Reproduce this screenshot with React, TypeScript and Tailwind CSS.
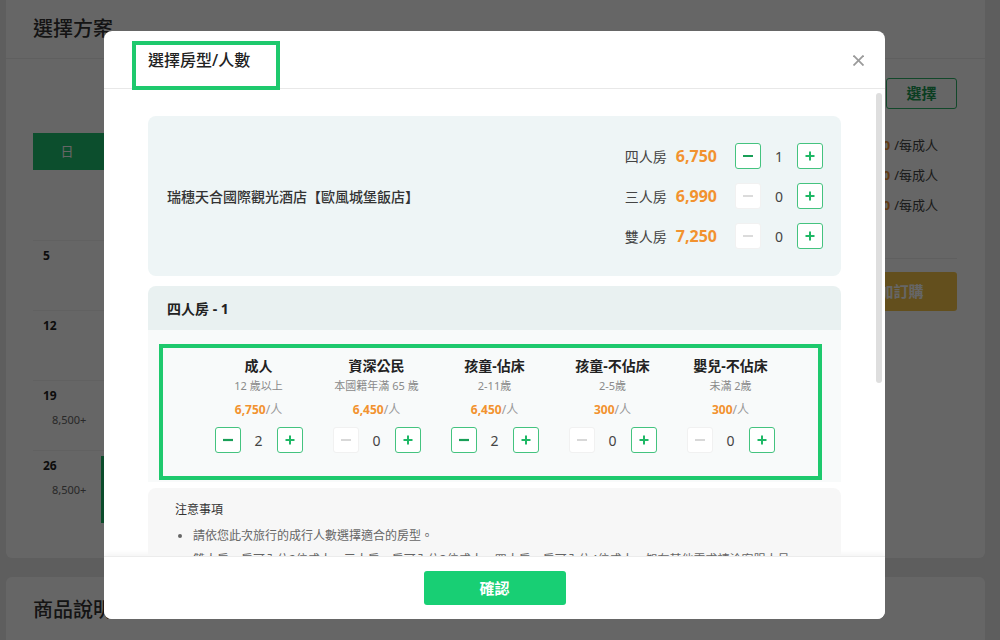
import React from "react";

const FONT = "font-['Noto_Sans','Noto_Sans_CJK_TC',sans-serif]";

function MinusIcon({ active }: { active: boolean }) {
  return (
    <svg width="12" height="12" viewBox="0 0 12 12">
      <line x1="1" y1="6" x2="11" y2="6" stroke={active ? "#1a9f58" : "#cfcfcf"} strokeWidth={active ? 2.2 : 1.6} />
    </svg>
  );
}

function PlusIcon() {
  return (
    <svg width="12" height="12" viewBox="0 0 12 12">
      <line x1="1.5" y1="6" x2="10.5" y2="6" stroke="#1fb866" strokeWidth="2" />
      <line x1="6" y1="1.5" x2="6" y2="10.5" stroke="#1fb866" strokeWidth="2" />
    </svg>
  );
}

function Counter({ value, minusActive }: { value: number; minusActive: boolean }) {
  return (
    <div className="flex items-center">
      <div
        className={
          minusActive
            ? "w-[26px] h-[26px] rounded-[3px] border border-[#44c37f] bg-white flex items-center justify-center"
            : "w-[26px] h-[26px] rounded-[3px] border border-[#f1f1f1] bg-white flex items-center justify-center"
        }
      >
        <MinusIcon active={minusActive} />
      </div>
      <div className="w-[36px] text-center text-[14px] text-[#444]">{value}</div>
      <div className="w-[26px] h-[26px] rounded-[3px] border border-[#44c37f] bg-white flex items-center justify-center">
        <PlusIcon />
      </div>
    </div>
  );
}

const rooms = [
  { label: "四人房", price: "6,750", count: 1 },
  { label: "三人房", price: "6,990", count: 0 },
  { label: "雙人房", price: "7,250", count: 0 },
];

const people = [
  { title: "成人", sub: "12 歲以上", price: "6,750", count: 2 },
  { title: "資深公民", sub: "本國籍年滿 65 歲", price: "6,450", count: 0 },
  { title: "孩童-佔床", sub: "2-11歲", price: "6,450", count: 2 },
  { title: "孩童-不佔床", sub: "2-5歲", price: "300", count: 0 },
  { title: "嬰兒-不佔床", sub: "未滿 2歲", price: "300", count: 0 },
];

function CalendarRow({ day, price, selected }: { day?: string; price?: string; selected?: boolean }) {
  return (
    <div className="h-[70px] flex border-t border-[#f2f2f2]">
      <div className="w-[68px] pl-[10px] pt-[7px]">
        {day && <div className="text-[12px] leading-[16px] font-bold text-[#222]">{day}</div>}
        {price && <div className="pl-[9px] mt-[8px] text-[11px] leading-[16px] text-[#666]">{price}</div>}
      </div>
      <div className="w-[68px] pt-[5px]">
        {selected && <div className="h-[67px] border-l-[3px] border-[#1fbf6c] bg-white" />}
      </div>
    </div>
  );
}

export default function App() {
  return (
    <div className={`relative w-[1000px] h-[640px] overflow-hidden bg-[#ebebeb] ${FONT}`}>
      {/* background page */}
      <div className="flex flex-col gap-[19px] pl-[6px] pr-[15px]">
        <div className="h-[558px] rounded-b-[6px] bg-white flex flex-col">
          <div className="h-[59px] border-b border-[#eeeeee] flex items-center pl-[27px] text-[20px] font-medium text-[#333]">
            選擇方案
          </div>
          <div className="flex justify-between pl-[27px] pr-[28px]">
            <div className="pt-[74px] w-[476px]">
              <div className="h-[37px] bg-[#20c270] flex">
                <div className="w-[68px] flex items-center justify-center text-[13px] text-white">日</div>
              </div>
              <div className="h-[70px]" />
              <CalendarRow day="5" />
              <CalendarRow day="12" />
              <CalendarRow day="19" price="8,500+" />
              <CalendarRow day="26" price="8,500+" selected />
            </div>
            <div className="w-[112px] pt-[19px] flex flex-col items-end">
              <div className="w-[71px] h-[31px] border border-[#2fb46a] rounded-[3px] flex items-center justify-center text-[15px] font-bold text-[#1c9c55]">
                選擇
              </div>
              <div className="w-full mt-[27px] flex flex-col gap-[12px] pr-[19px]">
                {[0, 1, 2].map((i) => (
                  <div key={i} className="flex justify-end items-center whitespace-nowrap text-[13px] leading-[18px]">
                    <span className="font-bold text-[#f0902e] mr-[4px]">8,500</span>
                    <span className="text-[#444]">/每成人</span>
                  </div>
                ))}
              </div>
              <div className="w-full mt-[44px] border-t border-[#eeeeee]" />
              <div className="w-full mt-[13px] h-[39px] rounded-[3px] bg-[#f7c64a] flex items-center justify-center text-[15px] font-bold text-white">
                加訂購
              </div>
            </div>
          </div>
        </div>
        <div className="h-[100px] rounded-[6px] bg-white pl-[27px] pt-[19px] text-[20px] leading-[28px] font-medium text-[#333]">
          商品說明
        </div>
      </div>

      {/* dim overlay */}
      <div className="absolute inset-0 bg-black/60" />

      {/* modal */}
      <div className="absolute left-[104px] top-[31px] w-[781px] h-[588px] bg-white rounded-[8px] flex flex-col overflow-hidden">
        <div className="relative h-[58px] shrink-0 border-b border-[#e8e8e8] flex items-center pl-[44px]">
          <div className="text-[16px] font-medium text-[#222]">選擇房型/人數</div>
          <div className="absolute left-[28px] top-[10px] w-[148px] h-[49px] border-4 border-[#1ec96d]" />
          <svg className="absolute left-[749px] top-[24px]" width="11" height="11" viewBox="0 0 11 11">
            <line x1="0.5" y1="0.5" x2="10.5" y2="10.5" stroke="#9a9a9a" strokeWidth="1.8" />
            <line x1="10.5" y1="0.5" x2="0.5" y2="10.5" stroke="#9a9a9a" strokeWidth="1.8" />
          </svg>
        </div>

        <div className="relative flex-1 overflow-hidden">
          <div className="px-[44px] pt-[27px] flex flex-col">
            <div className="h-[160px] rounded-[8px] bg-[#eef5f6] flex items-center justify-between pl-[19px] pr-[18px]">
              <div className="text-[14px] font-medium text-[#333]">瑞穗天合國際觀光酒店【歐風城堡飯店】</div>
              <div className="flex flex-col gap-[14px]">
                {rooms.map((r) => (
                  <div key={r.label} className="flex items-center">
                    <span className="text-[14px] text-[#444]">{r.label}</span>
                    <span className="ml-[9px] text-[16px] font-bold text-[#f2922f]">{r.price}</span>
                    <div className="ml-[18px]">
                      <Counter value={r.count} minusActive={r.count > 0} />
                    </div>
                  </div>
                ))}
              </div>
            </div>

            <div className="mt-[10px]">
              <div className="h-[44px] rounded-t-[8px] bg-[#e9f1f1] flex items-center pl-[19px] text-[14px] font-bold text-[#222]">
                四人房 - 1
              </div>
              <div className="relative bg-[#f8fafa] pt-[26px] pb-[29px] flex justify-center">
                {people.map((p) => (
                  <div key={p.title} className="w-[118px] flex flex-col items-center">
                    <div className="text-[14px] leading-[20px] font-bold text-[#222]">{p.title}</div>
                    <div className="mt-[2px] text-[11px] leading-[16px] text-[#8a8a8a]">{p.sub}</div>
                    <div className="mt-[7px] text-[12px] leading-[18px]">
                      <span className="font-bold text-[#f2922f]">{p.price}</span>
                      <span className="text-[#999]">/人</span>
                    </div>
                    <div className="mt-[8px]">
                      <Counter value={p.count} minusActive={p.count > 0} />
                    </div>
                  </div>
                ))}
                <div className="absolute left-[11px] top-[14px] w-[663px] h-[136px] border-4 border-[#1ec96d]" />
              </div>
            </div>

            <div className="mt-[6px] rounded-[8px] bg-[#f7f7f7] pl-[27px] pr-[27px] pt-[13px] pb-[20px]">
              <div className="text-[12px] leading-[18px] text-[#333]">注意事項</div>
              <ul className="mt-[8px] pl-[18px] list-disc text-[12px] leading-[18px] text-[#666] flex flex-col gap-[6px]">
                <li>請依您此次旅行的成行人數選擇適合的房型。</li>
                <li>雙人房一房可入住2位成人，三人房一房可入住3位成人，四人房一房可入住4位成人，如有其他需求請洽客服人員。</li>
              </ul>
            </div>
          </div>
          <div className="absolute right-[3px] top-[4px] w-[6px] h-[290px] rounded-full bg-[#dedede]" />
        </div>

        <div className="h-[63px] shrink-0 border-t border-[#ececec] shadow-[0_-2px_6px_rgba(0,0,0,0.05)] flex items-center justify-center bg-white">
          <div className="w-[142px] h-[34px] rounded-[3px] bg-[#18cf74] flex items-center justify-center text-[15px] font-bold text-white">
            確認
          </div>
        </div>
      </div>
    </div>
  );
}
